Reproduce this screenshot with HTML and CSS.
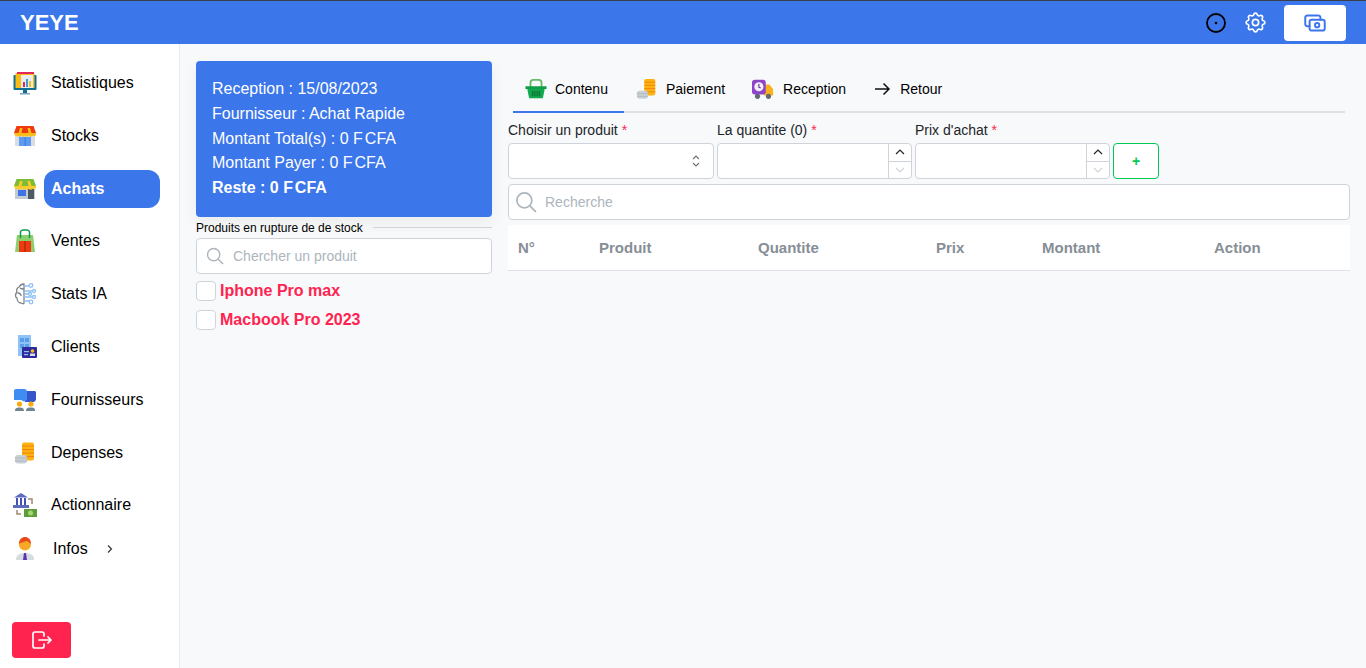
FILE: index.html
```html
<!DOCTYPE html>
<html lang="fr">
<head>
  <meta charset="UTF-8">
  <title>YEYE</title>
  <meta name="viewport" content="width=device-width, initial-scale=1.0">
  <link rel="stylesheet" href="styles.css">
</head>
<body>

  <header class="topbar">
    <span class="brand">YEYE</span>
    <div class="topbar-actions">
      <svg class="clock-icon" viewBox="0 0 20 20" width="20" height="20"><circle cx="10" cy="10" r="9" fill="none" stroke="#000" stroke-width="1.8"/><circle cx="10" cy="10" r="1.3" fill="#000"/></svg>
      <svg class="gear-icon" viewBox="0 0 24 24" width="25" height="25" fill="none" stroke="#fff" stroke-width="1.6" stroke-linecap="round" stroke-linejoin="round"><path d="M10.325 4.317c.426 -1.756 2.924 -1.756 3.35 0a1.724 1.724 0 0 0 2.573 1.066c1.543 -.94 3.31 .826 2.37 2.37a1.724 1.724 0 0 0 1.065 2.572c1.756 .426 1.756 2.924 0 3.35a1.724 1.724 0 0 0 -1.066 2.573c.94 1.543 -.826 3.31 -2.37 2.37a1.724 1.724 0 0 0 -2.572 1.065c-.426 1.756 -2.924 1.756 -3.35 0a1.724 1.724 0 0 0 -2.573 -1.066c-1.543 .94 -3.31 -.826 -2.37 -2.37a1.724 1.724 0 0 0 -1.065 -2.572c-1.756 -.426 -1.756 -2.924 0 -3.35a1.724 1.724 0 0 0 1.066 -2.573c-.94 -1.543 .826 -3.31 2.37 -2.37c1 .608 2.296 .07 2.572 -1.065z"/><circle cx="12" cy="12" r="3"/></svg>
      <button class="cash-btn">
        <svg viewBox="0 0 24 24" width="26" height="26" fill="none" stroke="#3b76ea" stroke-width="1.8" stroke-linecap="round" stroke-linejoin="round"><path d="M7 11a2 2 0 0 1 2 -2h10a2 2 0 0 1 2 2v6a2 2 0 0 1 -2 2h-10a2 2 0 0 1 -2 -2z"/><circle cx="14" cy="14" r="2"/><path d="M17 9v-2a2 2 0 0 0 -2 -2h-10a2 2 0 0 0 -2 2v6a2 2 0 0 0 2 2h2"/></svg>
      </button>
    </div>
  </header>

  <div class="layout">
    <aside class="sidebar">
      <nav class="side-nav">
        <a class="side-item" href="#">
          <svg class="side-icon" viewBox="0 0 24 24"><rect x="0.500" y="4" width="23" height="15" rx="1" fill="#0f6f94"/><rect x="2.500" y="2" width="19" height="15" fill="#f9bc15"/><rect x="4" y="1" width="17" height="2" fill="#e2275c"/><rect x="8" y="4" width="12" height="13" fill="#e9edf0"/><rect x="10" y="11" width="2" height="5" fill="#e2275c"/><rect x="13" y="8" width="2" height="8" fill="#3a9bd5"/><rect x="16" y="10" width="2" height="6" fill="#f9bc15"/><rect x="10" y="19" width="4" height="3" fill="#0f6f94"/><rect x="7" y="22" width="10" height="1.500" fill="#7ea6b8"/></svg>
          <span class="side-label">Statistiques</span>
        </a>
        <a class="side-item" href="#">
          <svg class="side-icon" viewBox="0 0 24 24"><rect x="2" y="10" width="20" height="12" fill="#d8dee2"/><rect x="6" y="13" width="12" height="9" fill="#5d9cf2"/><rect x="11.700" y="13" width="0.800" height="9" fill="#3570c4"/><path d="M3.500 2h17l2.500 7h-22z" fill="#ee3a10"/><path d="M1 9h22v1.500a2 2 0 0 1-3.600 1 2 2 0 0 1-3.700 0 2 2 0 0 1-3.700 0 2 2 0 0 1-3.700 0 2 2 0 0 1-3.700 0 2 2 0 0 1-3.100-1z" fill="#fbbc18"/><path d="M7 4h2.500l-1 5h-3zM14.500 4h2.500l1.500 5h-3z" fill="#fbbc18"/></svg>
          <span class="side-label">Stocks</span>
        </a>
        <a class="side-item active" href="#">
          <svg class="side-icon" viewBox="0 0 24 24"><rect x="2" y="10" width="20" height="12" fill="#c2ccd2"/><rect x="5" y="13" width="8" height="6" fill="#3f74e6"/><rect x="15" y="12" width="6" height="10" fill="#4c5a63"/><path d="M3.500 2h17l2.500 7h-22z" fill="#7cbd35"/><path d="M1 9h22v1.500a2 2 0 0 1-3.600 1 2 2 0 0 1-3.700 0 2 2 0 0 1-3.700 0 2 2 0 0 1-3.700 0 2 2 0 0 1-3.700 0 2 2 0 0 1-3.100-1z" fill="#fbcb2c"/><path d="M7 4h2.500l-1 5h-3zM14.500 4h2.500l1.500 5h-3z" fill="#fbcb2c"/></svg>
          <span class="side-label">Achats</span>
        </a>
        <a class="side-item" href="#">
          <svg class="side-icon" viewBox="0 0 24 24"><path d="M4 6h16l2 17H2z" fill="#8bd06d"/><path d="M7.500 9V3a2.500 2.500 0 0 1 2.500-2h4a2.500 2.500 0 0 1 2.500 2v6" fill="none" stroke="#0c9a4a" stroke-width="1.500"/><rect x="6" y="12" width="12" height="11" fill="#ee3a10"/><rect x="11.600" y="12" width="0.800" height="11" fill="#7a2105"/></svg>
          <span class="side-label">Ventes</span>
        </a>
        <a class="side-item" href="#">
          <svg class="side-icon" viewBox="0 0 24 24" fill="none" stroke-width="1.300"><path d="M11 2c-3 0-4 1-5 3-2 1-3 3-2 5-2 2-2 5 0 6 0 3 2 5 4 5 2 1 3 1 3 0z" stroke="#7d8287"/><path d="M4.500 11c2 0 3.500 1 3.500 3M7 6c1 1 2 1 4 1" stroke="#7d8287"/><path d="M11 4h5M11 9h8M11 12h4M11 15h8M11 19h5" stroke="#8fc0f5"/><circle cx="18" cy="3.500" r="1.800" stroke="#8fc0f5"/><circle cx="21" cy="9" r="1.500" stroke="#8fc0f5"/><circle cx="17" cy="12" r="1.500" stroke="#8fc0f5"/><circle cx="21" cy="15" r="1.500" stroke="#8fc0f5"/><circle cx="18" cy="20" r="1.800" stroke="#8fc0f5"/></svg>
          <span class="side-label">Stats IA</span>
        </a>
        <a class="side-item" href="#">
          <svg class="side-icon" viewBox="0 0 24 24"><rect x="5" y="0" width="13" height="21" fill="#8fc3f7"/><g fill="#5a9fe8"><rect x="7" y="3" width="4" height="4"/><rect x="12" y="3" width="4" height="4"/><rect x="7" y="9" width="4" height="4"/><rect x="12" y="9" width="4" height="4"/></g><rect x="9" y="12" width="15" height="11" rx="1" fill="#2f2a9c"/><rect x="11" y="16" width="5" height="1.200" fill="#8fc3f7"/><rect x="11" y="19" width="4" height="1.200" fill="#8fc3f7"/><circle cx="19.500" cy="16" r="1.800" fill="#f9bc15"/><rect x="17" y="18.500" width="5" height="2.500" fill="#d9dfe4"/></svg>
          <span class="side-label">Clients</span>
        </a>
        <a class="side-item" href="#">
          <svg class="side-icon" viewBox="0 0 24 24"><path d="M12 3h10a2 2 0 0 1 1 2v7l-2 2H12z" fill="#3456c9"/><path d="M3 1h8a3 3 0 0 1 3 3v8l-3 1.500-3-1.500H1V3a2 2 0 0 1 2-2z" fill="#3f8cf2"/><circle cx="6.500" cy="16" r="2.600" fill="#fba90f"/><circle cx="18" cy="16" r="2.600" fill="#fba90f"/><path d="M2 23c0-3 2-3.500 4.500-3.500s4.500 .5 4.500 3.500zM13 23c0-3 2-3.500 5-3.500s4 .5 4 3.500z" fill="#6f8591"/></svg>
          <span class="side-label">Fournisseurs</span>
        </a>
        <a class="side-item" href="#">
          <svg class="side-icon" viewBox="0 0 24 24"><rect x="9" y="1.500" width="12" height="18" rx="2" fill="#fbb40f"/><path d="M9 5h12M9 8.500h12M9 12h12M9 15.500h12" stroke="#f57f17"/><rect x="2" y="14" width="12" height="8.500" rx="3" fill="#c8d0d5"/><path d="M2 17h12M2 20h12" stroke="#aeb8bf"/></svg>
          <span class="side-label">Depenses</span>
        </a>
        <a class="side-item" href="#">
          <svg class="side-icon" viewBox="0 0 24 24"><path d="M8 0l7 4.500H1z" fill="#5c6bc0"/><path d="M3 5h2v7H3zM7 5h2v7H7zM11 5h2v7h-2z" fill="#3f51b5"/><rect x="0" y="12" width="16" height="3" fill="#5c6bc0"/><path d="M15 6h4v5M4 17v4h4" fill="none" stroke="#a08770" stroke-width="1.500"/><rect x="11" y="16" width="13" height="8" fill="#5f9c3a"/><circle cx="17.500" cy="20" r="2.500" fill="#a5d66f"/></svg>
          <span class="side-label">Actionnaire</span>
        </a>
        <a class="side-item side-item-infos" href="#">
          <svg class="side-icon" viewBox="0 0 24 24"><path d="M3 23c0-5 3-7 9-7s9 2 9 7z" fill="#d5dde1"/><path d="M11 16h2l1 7h-4z" fill="#5e35b1"/><circle cx="12" cy="7.500" r="6" fill="#f9a825"/><path d="M6 7c0-5 3-7 6-7s6 2 6 7c-2-1-3-3-4-3-2 1-6 1-8 3z" fill="#e64a19"/></svg>
          <span class="side-label">Infos</span>
          <svg class="side-arrow" viewBox="0 0 8 10" width="8" height="10"><path d="M2 1.500L5.500 5 2 8.500" fill="none" stroke="#333" stroke-width="1.200"/></svg>
        </a>
      </nav>
      <button class="logout-btn">
        <svg viewBox="0 0 24 24" width="24" height="24" fill="none" stroke="#fff" stroke-width="1.700" stroke-linecap="round" stroke-linejoin="round"><path d="M14 8v-2a2 2 0 0 0 -2 -2h-7a2 2 0 0 0 -2 2v12a2 2 0 0 0 2 2h7a2 2 0 0 0 2 -2v-2"/><path d="M9 12h12l-3 -3M18 15l3 -3"/></svg>
      </button>
    </aside>

    <main class="content">
      <section class="left-col">
        <div class="summary-card">
          <p>Reception : 15/08/2023</p>
          <p>Fournisseur : Achat Rapide</p>
          <p>Montant Total(s) : 0 <span class="currency">F CFA</span></p>
          <p>Montant Payer : 0 <span class="currency">F CFA</span></p>
          <p class="summary-rest">Reste : 0 <span class="currency">F CFA</span></p>
        </div>
        <div class="divider"><span>Produits en rupture de de stock</span></div>
        <div class="search-box">
          <svg class="search-icon" viewBox="0 0 20 20" width="18" height="18"><circle cx="8.500" cy="8.500" r="6.800" fill="none" stroke="#adb5bd" stroke-width="1.600"/><path d="M13.500 13.500L19 19" stroke="#adb5bd" stroke-width="1.600"/></svg>
          <span class="placeholder">Chercher un produit</span>
        </div>
        <label class="stock-row"><span class="check"></span>Iphone Pro max</label>
        <label class="stock-row"><span class="check"></span>Macbook Pro 2023</label>
      </section>

      <section class="right-col">
        <div class="tabs">
          <a class="tab active" href="#">
            <svg class="tab-icon" viewBox="0 0 24 24"><path d="M6 10V5a3 3 0 0 1 3-3h6a3 3 0 0 1 3 3v5" fill="none" stroke="#66bb6a" stroke-width="2"/><path d="M0.500 9h23v3H0.500z" fill="#0f9d48"/><path d="M2.500 12h19l-2 10H4.500z" fill="#13a94f"/><path d="M8 14v6M10 14v6M12 14v6M14 14v6M16 14v6" stroke="#0b6b31"/></svg>
            <span>Contenu</span>
          </a>
          <a class="tab" href="#">
            <svg class="tab-icon" viewBox="0 0 24 24"><rect x="9" y="1" width="12" height="18" rx="2" fill="#fbb40f"/><path d="M9 4.500h12M9 8h12M9 11.500h12M9 15h12" stroke="#f57f17"/><rect x="1" y="14" width="12" height="8.500" rx="3" fill="#c8d0d5"/><path d="M1 17h12M1 20h12" stroke="#aeb8bf"/></svg>
            <span>Paiement</span>
          </a>
          <a class="tab" href="#">
            <svg class="tab-icon tab-icon-wide" viewBox="0 0 24 24"><path d="M13 7h6l4 5v7H13z" fill="#f9b11c"/><rect x="0" y="2" width="15" height="16" rx="3" fill="#8e44c9"/><circle cx="7.500" cy="9.500" r="5" fill="#f4eefa"/><path d="M7.500 6.500v3.500l2 1" fill="none" stroke="#5e2a92" stroke-width="1.200"/><circle cx="6" cy="20" r="2.800" fill="#5f6b73"/><circle cx="18" cy="20" r="2.800" fill="#5f6b73"/></svg>
            <span>Reception</span>
          </a>
          <a class="tab" href="#">
            <svg class="tab-icon-arrow" viewBox="0 0 18 18" width="18" height="18"><path d="M1 9h14M9.500 3.500L15 9l-5.500 5.500" fill="none" stroke="#111" stroke-width="1.500"/></svg>
            <span>Retour</span>
          </a>
        </div>

        <div class="form-row">
          <div class="field field-select">
            <label>Choisir un produit <i>*</i></label>
            <div class="control">
              <svg class="select-arrows" viewBox="0 0 10 16" width="10" height="16"><path d="M2 6l3-3 3 3M2 10l3 3 3-3" fill="none" stroke="#6c757d" stroke-width="1.100"/></svg>
            </div>
          </div>
          <div class="field field-number">
            <label>La quantite (0) <i>*</i></label>
            <div class="control">
              <div class="stepper">
                <span><svg viewBox="0 0 12 8" width="12" height="8"><path d="M2 6l4-4 4 4" fill="none" stroke="#212529" stroke-width="1.200"/></svg></span>
                <span><svg viewBox="0 0 12 8" width="12" height="8"><path d="M2 2l4 4 4-4" fill="none" stroke="#ced4da" stroke-width="1.200"/></svg></span>
              </div>
            </div>
          </div>
          <div class="field field-number">
            <label>Prix d'achat <i>*</i></label>
            <div class="control">
              <div class="stepper">
                <span><svg viewBox="0 0 12 8" width="12" height="8"><path d="M2 6l4-4 4 4" fill="none" stroke="#212529" stroke-width="1.200"/></svg></span>
                <span><svg viewBox="0 0 12 8" width="12" height="8"><path d="M2 2l4 4 4-4" fill="none" stroke="#ced4da" stroke-width="1.200"/></svg></span>
              </div>
            </div>
          </div>
          <button class="add-btn">+</button>
        </div>

        <div class="search-box search-box-wide">
          <svg class="search-icon" viewBox="0 0 20 20" width="22" height="22"><circle cx="8.500" cy="8.500" r="6.800" fill="none" stroke="#adb5bd" stroke-width="1.600"/><path d="M13.500 13.500L19 19" stroke="#adb5bd" stroke-width="1.600"/></svg>
          <span class="placeholder">Recherche</span>
        </div>

        <div class="table-head">
          <span>N°</span>
          <span>Produit</span>
          <span>Quantite</span>
          <span>Prix</span>
          <span>Montant</span>
          <span>Action</span>
        </div>
      </section>
    </main>
  </div>

</body>
</html>
```

FILE: styles.css
```css
* {
  box-sizing: border-box;
}

html, body {
  height: 100%;
}

body {
  margin: 0;
  font-family: "Liberation Sans", Arial, sans-serif;
  color: #000;
  background: #f8f9fa;
  overflow: hidden;
}

a {
  color: inherit;
  text-decoration: none;
}

/* top bar */
.topbar {
  height: 44px;
  display: flex;
  align-items: center;
  justify-content: space-between;
  padding: 0 20px;
  background: #3b76ea;
  border-top: 1px solid #3a3f47;
}

.brand {
  color: #fff;
  font-size: 22px;
  font-weight: bold;
}

.topbar-actions {
  display: flex;
  align-items: center;
}

.clock-icon {
  margin-right: 17px;
}

.gear-icon {
  margin-right: 16px;
}

.cash-btn {
  width: 62px;
  height: 36px;
  display: flex;
  align-items: center;
  justify-content: center;
  padding: 0;
  margin-top: 1px;
  background: #fff;
  border: none;
  border-radius: 4px;
}

/* sidebar */
.layout {
  display: flex;
  height: 624px;
}

.sidebar {
  width: 180px;
  flex-shrink: 0;
  display: flex;
  flex-direction: column;
  justify-content: space-between;
  padding: 12.6px 0 10px;
  background: #fff;
  border-right: 1px solid #e9ecef;
}

.side-item {
  height: 52.8px;
  display: flex;
  align-items: center;
  padding-left: 13px;
  font-size: 16px;
}

.side-icon {
  width: 24px;
  height: 24px;
  flex-shrink: 0;
  margin-right: 7px;
}

.side-label {
  width: 116px;
  height: 38px;
  line-height: 37px;
  padding-left: 7px;
  border-radius: 12px;
}

.side-item.active .side-label {
  background: #3b76ea;
  color: #fff;
  font-weight: bold;
}

.side-item-infos {
  height: 35px;
}

.side-item-infos .side-label {
  width: auto;
  padding-left: 9px;
  margin-right: 18px;
}

.logout-btn {
  width: 59px;
  height: 36px;
  display: flex;
  align-items: center;
  justify-content: center;
  padding: 0;
  margin-left: 12px;
  background: #ff2450;
  border: none;
  border-radius: 4px;
}

/* main */
.content {
  flex: 1;
  min-width: 0;
  display: flex;
  gap: 16px;
  padding: 17px 16px;
}

.left-col {
  width: 296px;
  flex-shrink: 0;
}

.summary-card {
  height: 156px;
  padding: 16px;
  background: #3b76ea;
  color: #fff;
  font-size: 16px;
  line-height: 24.75px;
  border-radius: 4px;
  box-shadow: 0 6px 16px rgba(0, 0, 0, 0.06);
}

.summary-card p {
  margin: 0;
}

.currency {
  word-spacing: -2.5px;
}

.summary-rest {
  font-weight: bold;
}

.divider {
  height: 21px;
  display: flex;
  align-items: center;
  gap: 10px;
  font-size: 12px;
}

.divider::after {
  content: "";
  flex: 1;
  height: 1px;
  background: #ced4da;
}

.search-box {
  height: 36px;
  display: flex;
  align-items: center;
  padding-left: 9px;
  background: #fff;
  border: 1px solid #ced4da;
  border-radius: 4px;
  font-size: 14px;
}

.search-icon {
  flex-shrink: 0;
  margin-right: 9px;
}

.placeholder {
  color: #adb5bd;
}

.search-box-wide {
  margin-top: 5px;
  padding-left: 6px;
}

.search-box-wide .search-icon {
  margin-right: 8px;
}

.stock-row {
  height: 29px;
  display: flex;
  align-items: center;
  gap: 4px;
  color: #ff2450;
  font-size: 16px;
  font-weight: bold;
}

.left-col .search-box + .stock-row {
  margin-top: 2px;
}

.check {
  width: 20px;
  height: 20px;
  margin-top: 1px;
  background: #fff;
  border: 1px solid #ced4da;
  border-radius: 4px;
}

.right-col {
  flex: 1;
  min-width: 0;
}

/* tabs */
.tabs {
  height: 36px;
  display: flex;
  margin: 16px 5px 0;
  border-bottom: 2px solid #dee2e6;
}

.tab {
  height: 36px;
  display: flex;
  align-items: center;
  gap: 8px;
  padding: 0 16px 10px 12px;
  font-size: 14px;
  border-bottom: 2px solid transparent;
}

.tab.active {
  border-bottom-color: #3b76ea;
}

.tab:nth-child(2) {
  padding-right: 14px;
}

.tab-icon {
  width: 22px;
  height: 22px;
  flex-shrink: 0;
}

.tab-icon-wide {
  width: 24px;
}

.tab-icon-arrow {
  flex-shrink: 0;
}

/* form */
.form-row {
  display: flex;
  align-items: flex-end;
  gap: 3px;
  margin-top: 7px;
}

.field label {
  display: block;
  height: 23px;
  line-height: 20px;
  font-size: 14px;
  color: #212529;
}

.field i {
  color: #ff2450;
  font-style: normal;
}

.field-select {
  width: 206px;
}

.field-number {
  width: 195px;
}

.control {
  height: 36px;
  display: flex;
  align-items: center;
  justify-content: flex-end;
  background: #fff;
  border: 1px solid #ced4da;
  border-radius: 4px;
}

.select-arrows {
  margin-right: 12px;
}

.stepper {
  width: 23px;
  height: 100%;
  display: flex;
  flex-direction: column;
  border-left: 1px solid #ced4da;
}

.stepper span {
  flex: 1;
  display: flex;
  align-items: center;
  justify-content: center;
}

.stepper span + span {
  border-top: 1px solid #ced4da;
}

.add-btn {
  width: 46px;
  height: 36px;
  background: #fff;
  border: 1px solid #00c853;
  border-radius: 4px;
  color: #00c853;
  font-size: 14px;
  font-weight: bold;
  font-family: inherit;
}

/* table */
.table-head {
  height: 46px;
  display: grid;
  grid-template-columns: 81px 159px 178px 106px 172px 1fr;
  align-items: center;
  margin-top: 5px;
  padding-left: 10px;
  background: #fff;
  border-bottom: 1px solid #dee2e6;
  color: #868e96;
  font-size: 15px;
  font-weight: bold;
}
```
